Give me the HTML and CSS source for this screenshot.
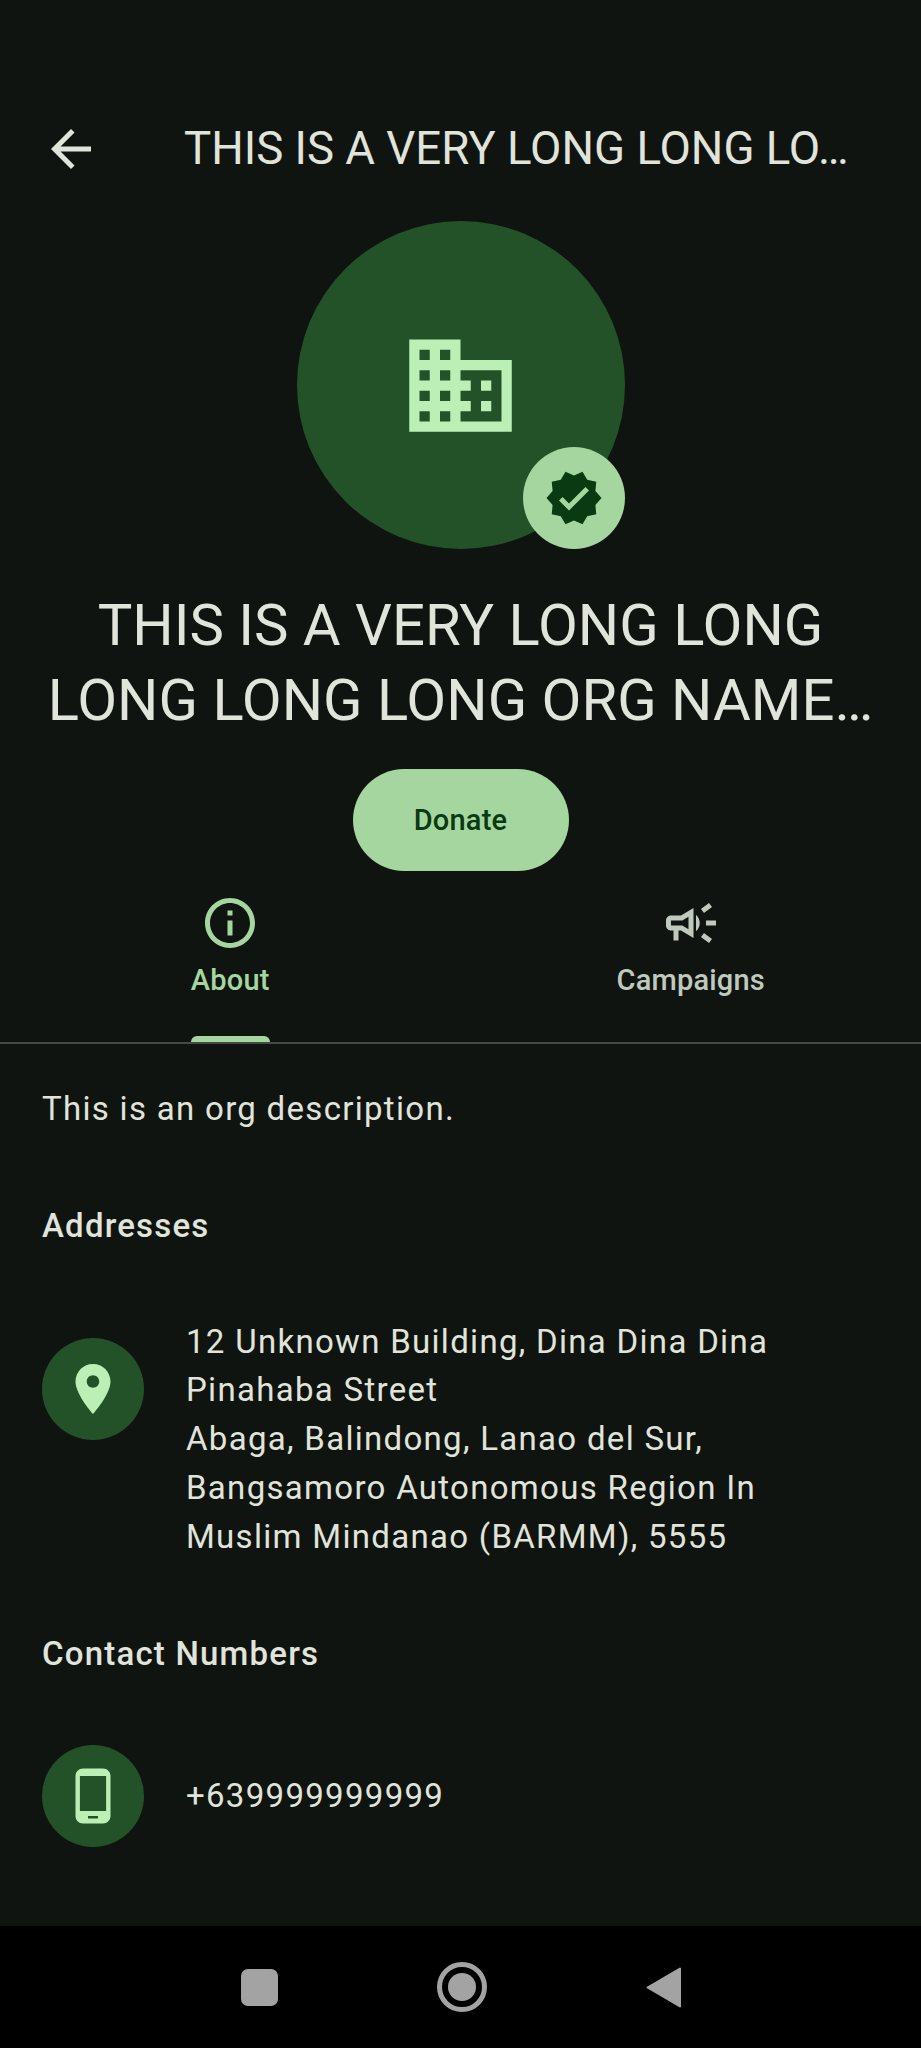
FILE: index.html
```html
<!DOCTYPE html>
<html lang="en">
  <head>
    <meta charset="UTF-8" />
    <meta name="viewport" content="width=device-width, initial-scale=1.0" />
    <title>Organization</title>
    <link rel="stylesheet" href="styles.css">
  </head>
  <body>
    <div class="screen">
      <header class="appbar">
        <svg class="icon back" viewBox="0 0 24 24"><path d="M20 11H7.83l5.59-5.59L12 4l-8 8 8 8 1.41-1.41L7.83 13H20v-2z"/></svg>
        <h1 class="appbar-title">THIS IS A VERY LONG LONG LO…</h1>
      </header>

      <section class="profile">
        <div class="avatar">
          <svg class="icon building" viewBox="0 0 24 24"><path d="M12 7V3H2v18h20V7H12zM6 19H4v-2h2v2zm0-4H4v-2h2v2zm0-4H4V9h2v2zm0-4H4V5h2v2zm4 12H8v-2h2v2zm0-4H8v-2h2v2zm0-4H8V9h2v2zm0-4H8V5h2v2zm10 12h-8v-2h2v-2h-2v-2h2v-2h-2V9h8v10zm-2-8h-2v2h2v-2zm0 4h-2v2h2v-2z"/></svg>
          <div class="badge">
            <svg class="icon verified" viewBox="0 0 24 24"><path d="M23 12l-2.44-2.78.34-3.68-3.61-.82-1.89-3.18L12 3 8.6 1.54 6.71 4.72l-3.61.81.34 3.68L1 12l2.44 2.78-.34 3.69 3.61.82 1.89 3.18L12 21l3.4 1.46 1.89-3.18 3.61-.82-.34-3.68L23 12zm-13 5l-4-4 1.41-1.41L10 14.17l6.59-6.59L18 9l-8 8z"/></svg>
          </div>
        </div>
        <h2 class="org-name">THIS IS A VERY LONG LONG<br>LONG LONG LONG ORG NAME…</h2>
        <button class="donate">Donate</button>
      </section>

      <nav class="tabs">
        <div class="tab active">
          <svg class="icon" viewBox="0 0 24 24"><path d="M11 7h2v2h-2zm0 4h2v6h-2zm1-9C6.48 2 2 6.48 2 12s4.48 10 10 10 10-4.48 10-10S17.52 2 12 2zm0 18c-4.41 0-8-3.59-8-8s3.59-8 8-8 8 3.59 8 8-3.59 8-8 8z"/></svg>
          <span class="tab-label">About<i class="indicator"></i></span>
        </div>
        <div class="tab">
          <svg class="icon" viewBox="0 0 24 24"><path d="M18 11v2h4v-2h-4zm-2 6.61c.96.71 2.21 1.65 3.2 2.39.4-.53.8-1.07 1.2-1.6-.99-.74-2.24-1.68-3.2-2.4-.4.54-.8 1.08-1.2 1.61zM20.4 5.6c-.4-.53-.8-1.07-1.2-1.6-.99.74-2.24 1.68-3.2 2.4.4.53.8 1.07 1.2 1.6.96-.72 2.21-1.65 3.2-2.4zM4 9c-1.1 0-2 .9-2 2v2c0 1.1.9 2 2 2h1v4h2v-4h1l5 3V6L8 9H4zm5.03 1.71L11 9.53v4.94l-1.97-1.18-.48-.29H4v-2h4.55l.48-.29zM15.5 12c0-1.33-.58-2.53-1.5-3.35v6.69c.92-.81 1.5-2.01 1.5-3.34z"/></svg>
          <span class="tab-label">Campaigns</span>
        </div>
      </nav>

      <main class="content">
        <p class="text">This is an org description.</p>

        <h3 class="heading addresses">Addresses</h3>
        <div class="row">
          <div class="circle top">
            <svg class="icon" viewBox="0 0 24 24"><path d="M12 2C8.13 2 5 5.13 5 9c0 5.25 7 13 7 13s7-7.75 7-13c0-3.87-3.13-7-7-7zm0 9.5c-1.38 0-2.5-1.12-2.5-2.5s1.12-2.5 2.5-2.5 2.5 1.12 2.5 2.5-1.12 2.5-2.5 2.5z"/></svg>
          </div>
          <p class="text">12 Unknown Building, Dina Dina Dina<br>Pinahaba Street<br>Abaga, Balindong, Lanao del Sur,<br>Bangsamoro Autonomous Region In<br>Muslim Mindanao (BARMM), 5555</p>
        </div>

        <h3 class="heading contacts">Contact Numbers</h3>
        <div class="row">
          <div class="circle">
            <svg class="icon" viewBox="0 0 24 24"><path d="M16 1H8C6.34 1 5 2.34 5 4v16c0 1.66 1.34 3 3 3h8c1.66 0 3-1.34 3-3V4c0-1.66-1.34-3-3-3zm-2 20h-4v-1h4v1zm3.25-3H6.75V4h10.5v14z"/></svg>
          </div>
          <p class="text">+639999999999</p>
        </div>
      </main>

      <footer class="navbar">
        <span class="nav-square"></span>
        <span class="nav-home"><i></i></span>
        <svg class="nav-back" viewBox="0 0 35 41"><path d="M34 1.5v38L1.5 20.5z" stroke-linejoin="round" stroke-width="2"/></svg>
      </footer>
    </div>
  </body>
</html>
```

FILE: styles.css
```css
* {
  margin: 0;
  padding: 0;
  box-sizing: border-box;
}
body {
  background: #0f1410;
  font-family: Roboto, "Liberation Sans", sans-serif;
}
.screen {
  width: 921px;
  height: 2048px;
  display: flex;
  flex-direction: column;
  overflow: hidden;
}
.icon {
  width: 60px;
  height: 60px;
  display: block;
  flex: none;
  fill: currentColor;
}

/* app bar */
.appbar {
  margin-top: 92px;
  height: 114px;
  display: flex;
  align-items: center;
  color: #e0e4db;
}
.back {
  margin-left: 41px;
}
.appbar-title {
  margin-left: 83px;
  font-size: 45.6px;
  font-weight: 400;
  line-height: 60px;
  white-space: nowrap;
}

/* avatar, name, donate */
.profile {
  margin-top: 15px;
  display: flex;
  flex-direction: column;
  align-items: center;
}
.avatar {
  position: relative;
  width: 328px;
  height: 328px;
  border-radius: 50%;
  background: #245228;
  color: #bcefb5;
  display: flex;
  align-items: center;
  justify-content: center;
}
.building {
  width: 123px;
  height: 123px;
}
.badge {
  position: absolute;
  right: 0;
  bottom: 0;
  width: 102px;
  height: 102px;
  border-radius: 50%;
  background: #a5d6a0;
  color: #0a3a12;
  display: flex;
  align-items: center;
  justify-content: center;
}
.org-name {
  margin-top: 39px;
  font-size: 58px;
  font-weight: 400;
  line-height: 74.5px;
  text-align: center;
  white-space: nowrap;
  color: #e0e4db;
}
.donate {
  margin-top: 32px;
  width: 216px;
  height: 102px;
  border: none;
  border-radius: 51px;
  background: #a5d6a0;
  color: #0a3a12;
  font-family: inherit;
  font-size: 29px;
  font-weight: 500;
  letter-spacing: 0.2px;
}

/* tabs */
.tabs {
  height: 173px;
  display: flex;
  border-bottom: 2px solid #434a44;
}
.tab {
  width: 50%;
  padding-top: 22px;
  display: flex;
  flex-direction: column;
  align-items: center;
  color: #c0c9bd;
}
.tab.active {
  color: #a5d6a0;
}
.tab-label {
  position: relative;
  margin-top: 7px;
  font-size: 29px;
  font-weight: 500;
  line-height: 40px;
  letter-spacing: 0.2px;
}
.indicator {
  position: absolute;
  left: 0;
  right: 0;
  top: 76px;
  height: 6px;
  border-radius: 6px 6px 0 0;
  background: #a5d6a0;
}

/* about tab */
.content {
  flex: 1;
  padding: 41px 42px 0;
  color: #e0e4db;
}
.text {
  font-size: 33px;
  line-height: 48.7px;
  letter-spacing: 1.3px;
}
.heading {
  font-size: 33px;
  font-weight: 500;
  line-height: 49px;
  letter-spacing: 1.2px;
}
.addresses {
  margin: 67px 0 68px;
}
.contacts {
  margin: 68px 0 67px;
}
.row {
  display: flex;
  align-items: center;
  gap: 42px;
}
.circle {
  width: 102px;
  height: 102px;
  flex: none;
  border-radius: 50%;
  background: #245228;
  color: #bcefb5;
  display: flex;
  align-items: center;
  justify-content: center;
}
.circle.top {
  align-self: flex-start;
  margin-top: 20px;
}

/* system navigation */
.navbar {
  height: 122px;
  background: #000;
  display: flex;
  align-items: center;
  justify-content: center;
  gap: 159px;
}
.nav-square {
  width: 37px;
  height: 37px;
  border-radius: 7px;
  background: #a3a3a3;
}
.nav-home {
  width: 50px;
  height: 50px;
  border: 5px solid #a3a3a3;
  border-radius: 50%;
  display: flex;
  align-items: center;
  justify-content: center;
}
.nav-home i {
  width: 28px;
  height: 28px;
  border-radius: 50%;
  background: #a3a3a3;
}
.nav-back {
  width: 35px;
  height: 41px;
  fill: #a3a3a3;
  stroke: #a3a3a3;
}
```
